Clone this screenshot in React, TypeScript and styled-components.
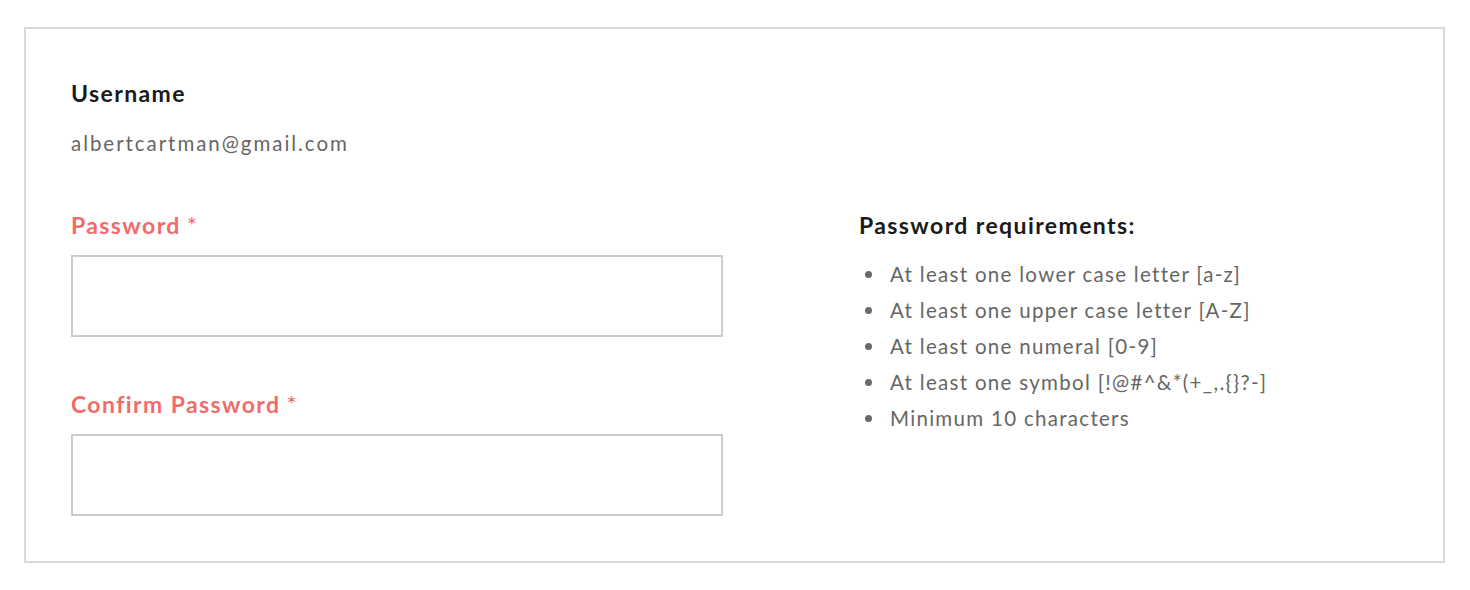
import React from "react";
import styled, { createGlobalStyle } from "styled-components";

const Global = createGlobalStyle`
  html, body { margin: 0; padding: 0; background: #ffffff; }
  body { font-family: Lato, "Open Sans", sans-serif; }
`;

const Page = styled.div`
  padding: 27px 25px 27px 24px;
`;

const Card = styled.section`
  border: 2px solid #d9d9d9;
  padding: 50px 45px 44px 45px;
  box-sizing: border-box;
  width: 1421px;
  height: 536px;
`;

const Title = styled.h2`
  margin: 0;
  font-size: 23px;
  font-weight: 700;
  line-height: 28px;
  letter-spacing: 1.4px;
  color: #1a1a1a;
`;

const Email = styled.p`
  margin: 24px 0 0 0;
  font-size: 20.5px;
  line-height: 24px;
  letter-spacing: 1.95px;
  color: #666666;
`;

const Columns = styled.div`
  display: grid;
  grid-template-columns: 652px 1fr;
  column-gap: 136px;
  margin-top: 56px;
`;

const FieldGroup = styled.div`
  display: flex;
  flex-direction: column;
`;

const Field = styled.div<{ $first?: boolean }>`
  display: flex;
  flex-direction: column;
  margin-top: ${(p) => (p.$first ? "0" : "53px")};
`;

const Label = styled.label`
  font-size: 23px;
  font-weight: 700;
  line-height: 28px;
  letter-spacing: 1.4px;
  color: #f26b6b;
`;

const Star = styled.span`
  font-size: 24px;
  font-weight: 400;
  line-height: 1;
  vertical-align: 0;
  margin-left: 6px;
  color: #f26b6b;
`;

const Input = styled.input`
  margin-top: 16px;
  width: 652px;
  height: 82px;
  box-sizing: border-box;
  border: 2px solid #cccccc;
  outline: none;
  background: #fff;
  padding: 0 16px;
  font-family: inherit;
  font-size: 20px;
`;

const ReqList = styled.ul`
  margin: 17px 0 0 0;
  padding: 0 0 0 31px;
  list-style: none;
`;

const ReqItem = styled.li`
  position: relative;
  font-size: 20.5px;
  line-height: 36px;
  letter-spacing: 1.3px;
  color: #666666;
  &::before {
    content: "";
    position: absolute;
    left: -25px;
    top: 15px;
    width: 7px;
    height: 7px;
    border-radius: 50%;
    background: #6a6a6a;
  }
`;

const requirements = [
  "At least one lower case letter [a-z]",
  "At least one upper case letter [A-Z]",
  "At least one numeral [0-9]",
  "At least one symbol [!@#^&*(+_,.{}?-]",
  "Minimum 10 characters",
];

export default function App() {
  return (
    <>
      <Global />
      <Page>
        <Card>
          <Title>Username</Title>
          <Email>albertcartman@gmail.com</Email>
          <Columns>
            <FieldGroup>
              <Field $first>
                <Label>
                  Password<Star>*</Star>
                </Label>
                <Input type="password" />
              </Field>
              <Field>
                <Label>
                  Confirm Password<Star>*</Star>
                </Label>
                <Input type="password" />
              </Field>
            </FieldGroup>
            <div>
              <Title>Password requirements:</Title>
              <ReqList>
                {requirements.map((r) => (
                  <ReqItem key={r}>{r}</ReqItem>
                ))}
              </ReqList>
            </div>
          </Columns>
        </Card>
      </Page>
    </>
  );
}
